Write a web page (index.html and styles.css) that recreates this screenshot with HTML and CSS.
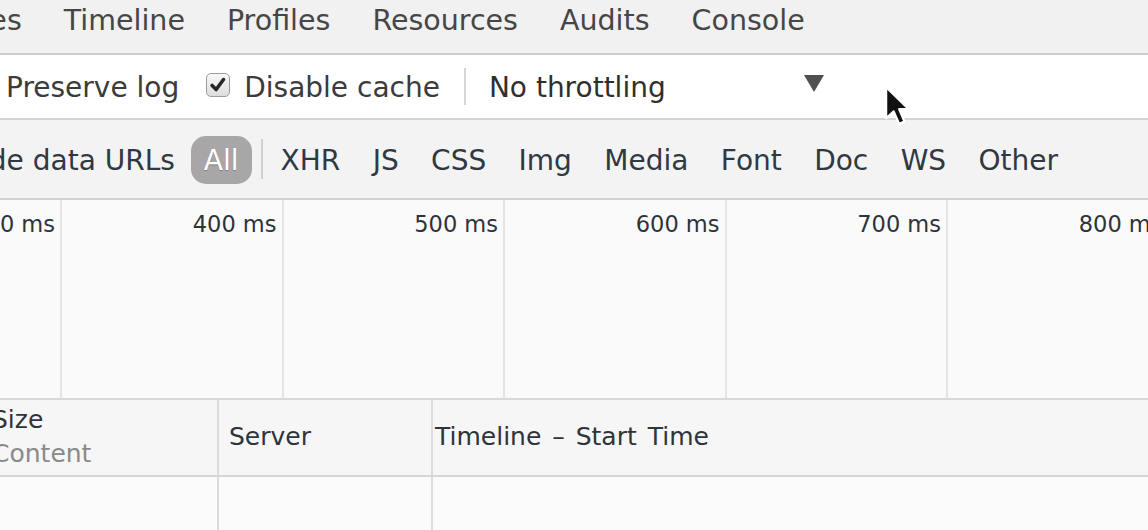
FILE: index.html
```html
<!DOCTYPE html>
<html>
<head>
<meta charset="utf-8">
<link rel="stylesheet" href="styles.css">
</head>
<body>
<div class="devtools">
  <div class="tabbar">
    <span class="tab tab-first">Sources</span>
    <span class="tab">Timeline</span>
    <span class="tab">Profiles</span>
    <span class="tab">Resources</span>
    <span class="tab">Audits</span>
    <span class="tab">Console</span>
  </div>

  <div class="toolbar">
    <span class="opt">Preserve log</span>
    <span class="checkbox">
      <svg viewBox="0 0 24 24" width="22" height="22"><path d="M5.5 12.5 L10 17 L18 6" fill="none" stroke="#262626" stroke-width="3.8" stroke-linecap="round" stroke-linejoin="round"/></svg>
    </span>
    <span class="opt opt-cache">Disable cache</span>
    <span class="vsep"></span>
    <div class="select">
      <span class="select-label">No throttling</span>
      <span class="select-arrow"></span>
    </div>
  </div>

  <div class="filterbar">
    <span class="hide-urls">Hide data URLs</span>
    <span class="pill">All</span>
    <span class="fsep"></span>
    <div class="types">
      <span>XHR</span>
      <span>JS</span>
      <span>CSS</span>
      <span>Img</span>
      <span>Media</span>
      <span>Font</span>
      <span>Doc</span>
      <span>WS</span>
      <span>Other</span>
    </div>
  </div>

  <div class="overview">
    <div class="tick"><span>300 ms</span></div>
    <div class="tick"><span>400 ms</span></div>
    <div class="tick"><span>500 ms</span></div>
    <div class="tick"><span>600 ms</span></div>
    <div class="tick"><span>700 ms</span></div>
    <div class="tick"><span>800 ms</span></div>
  </div>

  <div class="grid-head">
    <div class="col col-size">
      <div class="head-main">Size</div>
      <div class="head-sub">Content</div>
    </div>
    <div class="col col-server"><span>Server</span></div>
    <div class="col col-timeline"><span>Timeline – Start Time</span></div>
  </div>
  <div class="grid-body">
    <div class="col col-size"></div>
    <div class="col col-server"></div>
    <div class="col col-timeline"></div>
  </div>

  <svg class="cursor" viewBox="0 0 26 40" width="28" height="43">
    <path d="M2 2 L2 31 L9 24.5 L14 36 L19 34 L14 22.5 L23 22.5 Z" fill="#111" stroke="#fff" stroke-width="2" stroke-linejoin="round"/>
  </svg>
</div>
</body>
</html>
```

FILE: styles.css
```css
html, body {
  margin: 0;
  padding: 0;
}
body {
  width: 1148px;
  height: 530px;
  overflow: hidden;
  background: #fafafa;
  font-family: "DejaVu Sans", "Liberation Sans", sans-serif;
}
.devtools {
  position: relative;
  width: 1148px;
  height: 530px;
  overflow: hidden;
  display: flex;
  flex-direction: column;
}

/* Tab bar */
.tabbar {
  height: 53px;
  flex: none;
  background: #f1f1f1;
  border-bottom: 2px solid #cbcbcb;
  display: flex;
  align-items: flex-start;
  gap: 42px;
  white-space: nowrap;
  font-size: 28.5px;
  color: #464646;
}
.tab {
  line-height: 41px;
}
.tab-first {
  margin-left: -91px;
}

/* Toolbar */
.toolbar {
  height: 63px;
  flex: none;
  background: #ffffff;
  border-bottom: 2px solid #d4d4d4;
  display: flex;
  align-items: center;
  padding-left: 6px;
  white-space: nowrap;
  font-size: 28px;
  color: #3b3b3b;
}
.opt {
  line-height: 63px;
  padding-top: 2px;
}
.checkbox {
  margin-left: 27px;
  width: 22px;
  height: 22px;
  border: 1px solid #9c9c9c;
  border-radius: 5px;
  background: linear-gradient(#f7f7f7, #dedede);
  display: flex;
  align-items: center;
  justify-content: center;
  margin-top: -3px;
}
.opt-cache {
  margin-left: 14px;
}
.vsep {
  margin-left: 24px;
  width: 2px;
  height: 37px;
  background: #d6d6d6;
}
.select {
  margin-left: 23px;
  width: 335px;
  display: flex;
  align-items: center;
  justify-content: space-between;
  color: #2f2f2f;
}
.select-label {
  line-height: 63px;
  padding-top: 2px;
}
.select-arrow {
  width: 0;
  height: 0;
  border-left: 10px solid transparent;
  border-right: 10px solid transparent;
  border-top: 17px solid #505050;
  margin-top: -7px;
}

/* Filter bar */
.filterbar {
  height: 78px;
  flex: none;
  background: #f3f3f3;
  border-bottom: 2px solid #d2d2d2;
  display: flex;
  align-items: center;
  white-space: nowrap;
  font-size: 28px;
  color: #303842;
}
.hide-urls {
  margin-left: -40px;
  line-height: 78px;
  padding-top: 4px;
}
.pill {
  margin-left: 16px;
  height: 48px;
  line-height: 50px;
  padding: 0 13px;
  border-radius: 15px;
  background: #a9a6a7;
  color: #ffffff;
  margin-top: 2px;
  text-shadow: 0 1px 1px rgba(0, 0, 0, 0.25);
}
.fsep {
  margin-left: 9px;
  width: 2px;
  height: 40px;
  background: #d0d0d0;
}
.types {
  margin-left: 18px;
  display: flex;
  gap: 32.4px;
  line-height: 78px;
  padding-top: 4px;
}

/* Overview */
.overview {
  height: 198px;
  flex: none;
  background: #fafafa;
  border-bottom: 2px solid #d9d9d9;
  display: flex;
  margin-left: -159.5px;
}
.tick {
  flex: none;
  width: 221.5px;
  box-sizing: border-box;
  border-right: 2px solid #e4e4e4;
  text-align: right;
  padding: 8px 5px 0 0;
  font-size: 22.5px;
  line-height: 32px;
  color: #2e333a;
  white-space: nowrap;
}

/* Grid */
.grid-head {
  height: 75px;
  flex: none;
  background: #f6f6f6;
  border-bottom: 2px solid #d6d6d6;
  display: flex;
  margin-left: -14px;
  font-size: 25px;
  color: #2f343b;
  white-space: nowrap;
}
.grid-body {
  flex: 1;
  background: #fbfbfb;
  display: flex;
  margin-left: -14px;
}
.col {
  box-sizing: border-box;
  flex: none;
}
.col-size {
  width: 233px;
  border-right: 2px solid #dcdcdc;
  padding: 3px 0 0 6px;
  line-height: 34px;
}
.head-sub {
  color: #8a8a8a;
}
.col-server {
  width: 214px;
  border-right: 2px solid #dcdcdc;
  padding-left: 10px;
  display: flex;
  align-items: center;
}
.col-timeline {
  flex: 1;
  padding-left: 2px;
  display: flex;
  align-items: center;
  word-spacing: 3px;
}
.grid-head .col-server,
.grid-head .col-timeline {
  padding-bottom: 2px;
}

/* Cursor overlay */
.cursor {
  position: absolute;
  left: 884px;
  top: 85px;
}
```
